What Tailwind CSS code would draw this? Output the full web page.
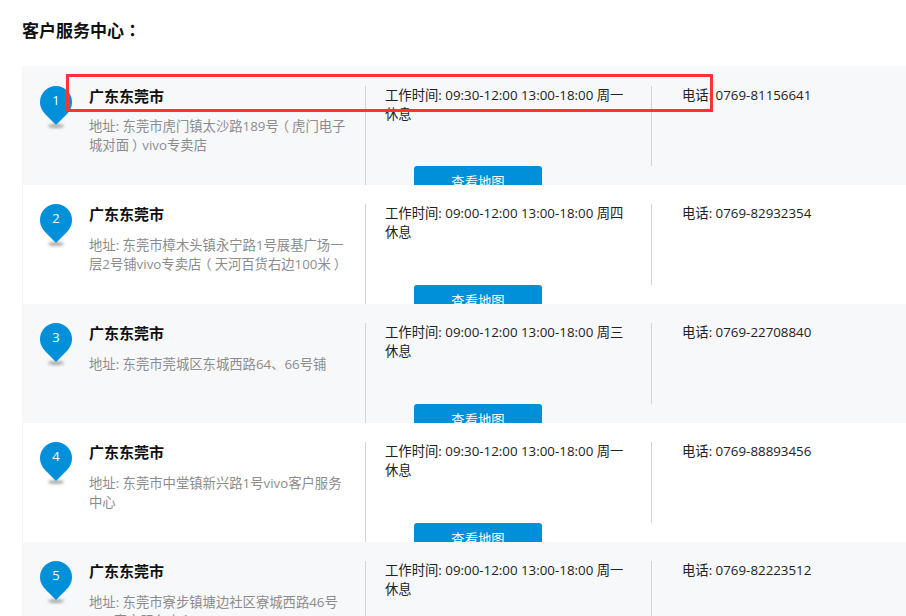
<!DOCTYPE html>
<html lang="zh-CN">
<head>
  <meta charset="utf-8"/>
  <title>客户服务中心</title>
  <script src="https://cdn.jsdelivr.net/npm/@tailwindcss/browser@4"></script>
</head>
<body class="relative h-[616px] w-[906px] overflow-hidden bg-white font-['Open_Sans','Noto_Sans_CJK_SC',sans-serif] text-[13.33px] leading-[19px] text-[#222]">
  <div class="pl-[22px]">
    <h2 lang="zh-TW" class="h-[66px] pt-[19px] font-['Noto_Sans_CJK_TC',sans-serif] text-[17px] leading-[22px] font-bold text-[#111]">客户服务中心：</h2>

    <!-- row 1 -->
    <div class="flex h-[119px] overflow-hidden bg-[#f7f8fa] pt-[20px]">
      <div class="flex w-[343px] shrink-0 pl-[18px]">
        <div class="relative h-[44px] w-[32px] shrink-0">
          <svg class="absolute top-0 left-0" width="32" height="44" viewBox="0 0 32 44"><ellipse cx="16" cy="40" rx="8" ry="2" fill="#aaa" class="blur-[1.5px]"/><path d="M16 0a16 16 0 0 1 16 16c0 6-3 10-7 14l-9 9-9-9c-4-4-7-8-7-14A16 16 0 0 1 16 0z" fill="#0090da"/></svg>
          <span class="absolute top-[5px] left-0 w-[32px] text-center text-[13px] font-medium text-white">1</span>
        </div>
        <div class="ml-[17px] w-[262px]">
          <p class="text-[15px] leading-[20px] font-bold text-[#111]">广东东莞市</p>
          <p class="mt-[11px] text-[#8c8c8c]">地址: 东莞市虎门镇太沙路189号<span class="relative left-[-3px]">（</span>虎门电子城对面<span class="relative left-[3px]">）</span>vivo专卖店</p>
        </div>
      </div>
      <div class="h-[100px] w-[286px] shrink-0 border-l border-[#d4d4d4] pl-[19px]">
        <p class="w-[245px]">工作时间: 09:30-12:00 13:00-18:00 周一休息</p>
        <a class="mt-[42px] ml-[29px] block h-[40px] w-[128px] rounded-[3px] bg-[#0090da] pt-[7px] text-center text-white">查看地图</a>
      </div>
      <div class="h-[80px] border-l border-[#d4d4d4] pl-[30px]">电话: 0769-81156641</div>
    </div>

    <!-- row 2 -->
    <div class="flex h-[119px] overflow-hidden border-l border-[#f2f2f2] bg-white pt-[19px]">
      <div class="flex w-[342px] shrink-0 pl-[17px]">
        <div class="relative h-[44px] w-[32px] shrink-0">
          <svg class="absolute top-0 left-0" width="32" height="44" viewBox="0 0 32 44"><ellipse cx="16" cy="40" rx="8" ry="2" fill="#aaa" class="blur-[1.5px]"/><path d="M16 0a16 16 0 0 1 16 16c0 6-3 10-7 14l-9 9-9-9c-4-4-7-8-7-14A16 16 0 0 1 16 0z" fill="#0090da"/></svg>
          <span class="absolute top-[5px] left-0 w-[32px] text-center text-[13px] font-medium text-white">2</span>
        </div>
        <div class="ml-[17px] w-[262px]">
          <p class="text-[15px] leading-[20px] font-bold text-[#111]">广东东莞市</p>
          <p class="mt-[12px] text-[#8c8c8c]">地址: 东莞市樟木头镇永宁路1号展基广场一层2号铺vivo专卖店<span class="relative left-[-3px]">（</span>天河百货右边100米<span class="relative left-[3px]">）</span></p>
        </div>
      </div>
      <div class="h-[100px] w-[286px] shrink-0 border-l border-[#d4d4d4] pl-[19px]">
        <p class="w-[245px]">工作时间: 09:00-12:00 13:00-18:00 周四休息</p>
        <a class="mt-[43px] ml-[29px] block h-[40px] w-[128px] rounded-[3px] bg-[#0090da] pt-[7px] text-center text-white">查看地图</a>
      </div>
      <div class="h-[81px] border-l border-[#d4d4d4] pl-[30px]">电话: 0769-82932354</div>
    </div>

    <!-- row 3 -->
    <div class="flex h-[119px] overflow-hidden bg-[#f7f8fa] pt-[19px]">
      <div class="flex w-[343px] shrink-0 pl-[18px]">
        <div class="relative h-[44px] w-[32px] shrink-0">
          <svg class="absolute top-0 left-0" width="32" height="44" viewBox="0 0 32 44"><ellipse cx="16" cy="40" rx="8" ry="2" fill="#aaa" class="blur-[1.5px]"/><path d="M16 0a16 16 0 0 1 16 16c0 6-3 10-7 14l-9 9-9-9c-4-4-7-8-7-14A16 16 0 0 1 16 0z" fill="#0090da"/></svg>
          <span class="absolute top-[5px] left-0 w-[32px] text-center text-[13px] font-medium text-white">3</span>
        </div>
        <div class="ml-[17px] w-[262px]">
          <p class="text-[15px] leading-[20px] font-bold text-[#111]">广东东莞市</p>
          <p class="mt-[12px] text-[#8c8c8c]">地址: 东莞市莞城区东城西路64、66号铺</p>
        </div>
      </div>
      <div class="h-[100px] w-[286px] shrink-0 border-l border-[#d4d4d4] pl-[19px]">
        <p class="w-[245px]">工作时间: 09:00-12:00 13:00-18:00 周三休息</p>
        <a class="mt-[43px] ml-[29px] block h-[40px] w-[128px] rounded-[3px] bg-[#0090da] pt-[7px] text-center text-white">查看地图</a>
      </div>
      <div class="h-[81px] border-l border-[#d4d4d4] pl-[30px]">电话: 0769-22708840</div>
    </div>

    <!-- row 4 -->
    <div class="flex h-[119px] overflow-hidden border-l border-[#f2f2f2] bg-white pt-[19px]">
      <div class="flex w-[342px] shrink-0 pl-[17px]">
        <div class="relative h-[44px] w-[32px] shrink-0">
          <svg class="absolute top-0 left-0" width="32" height="44" viewBox="0 0 32 44"><ellipse cx="16" cy="40" rx="8" ry="2" fill="#aaa" class="blur-[1.5px]"/><path d="M16 0a16 16 0 0 1 16 16c0 6-3 10-7 14l-9 9-9-9c-4-4-7-8-7-14A16 16 0 0 1 16 0z" fill="#0090da"/></svg>
          <span class="absolute top-[5px] left-0 w-[32px] text-center text-[13px] font-medium text-white">4</span>
        </div>
        <div class="ml-[17px] w-[262px]">
          <p class="text-[15px] leading-[20px] font-bold text-[#111]">广东东莞市</p>
          <p class="mt-[12px] text-[#8c8c8c]">地址: 东莞市中堂镇新兴路1号vivo客户服务中心</p>
        </div>
      </div>
      <div class="h-[100px] w-[286px] shrink-0 border-l border-[#d4d4d4] pl-[19px]">
        <p class="w-[245px]">工作时间: 09:30-12:00 13:00-18:00 周一休息</p>
        <a class="mt-[43px] ml-[29px] block h-[40px] w-[128px] rounded-[3px] bg-[#0090da] pt-[7px] text-center text-white">查看地图</a>
      </div>
      <div class="h-[81px] border-l border-[#d4d4d4] pl-[30px]">电话: 0769-88893456</div>
    </div>

    <!-- row 5 -->
    <div class="flex h-[119px] overflow-hidden bg-[#f7f8fa] pt-[19px]">
      <div class="flex w-[343px] shrink-0 pl-[18px]">
        <div class="relative h-[44px] w-[32px] shrink-0">
          <svg class="absolute top-0 left-0" width="32" height="44" viewBox="0 0 32 44"><ellipse cx="16" cy="40" rx="8" ry="2" fill="#aaa" class="blur-[1.5px]"/><path d="M16 0a16 16 0 0 1 16 16c0 6-3 10-7 14l-9 9-9-9c-4-4-7-8-7-14A16 16 0 0 1 16 0z" fill="#0090da"/></svg>
          <span class="absolute top-[5px] left-0 w-[32px] text-center text-[13px] font-medium text-white">5</span>
        </div>
        <div class="ml-[17px] w-[262px]">
          <p class="text-[15px] leading-[20px] font-bold text-[#111]">广东东莞市</p>
          <p class="mt-[12px] text-[#8c8c8c]">地址: 东莞市寮步镇塘边社区寮城西路46号vivo客户服务中心</p>
        </div>
      </div>
      <div class="h-[100px] w-[286px] shrink-0 border-l border-[#d4d4d4] pl-[19px]">
        <p class="w-[245px]">工作时间: 09:00-12:00 13:00-18:00 周一休息</p>
      </div>
      <div class="h-[81px] border-l border-[#d4d4d4] pl-[30px]">电话: 0769-82223512</div>
    </div>
  </div>

  <!-- red annotation box drawn over the first row -->
  <div class="absolute top-[74px] left-[66px] h-[38px] w-[647px] border-[3px] border-[#ff3236]"></div>
</body>
</html>
